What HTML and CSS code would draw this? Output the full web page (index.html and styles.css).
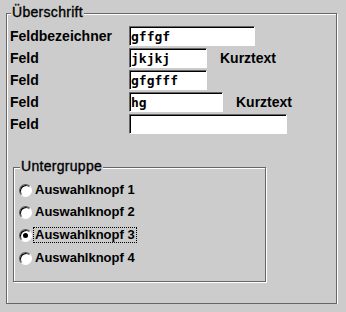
FILE: index.html
```html
<!DOCTYPE html>
<html lang="de">
<head>
    <meta charset="UTF-8">
    <title>Dialog</title>
    <link rel="stylesheet" href="styles.css">
</head>
<body>
    <div class="group outer">
        <span class="group-title">Überschrift</span>

        <div class="fields">
            <label class="field-label" for="f1">Feldbezeichner</label>
            <div class="field"><input class="edit w-126" id="f1" type="text" value="gffgf"></div>

            <label class="field-label" for="f2">Feld</label>
            <div class="field"><input class="edit w-78" id="f2" type="text" value="jkjkj"><span class="hint">Kurztext</span></div>

            <label class="field-label" for="f3">Feld</label>
            <div class="field"><input class="edit w-78" id="f3" type="text" value="gfgfff"></div>

            <label class="field-label" for="f4">Feld</label>
            <div class="field"><input class="edit w-94" id="f4" type="text" value="hg"><span class="hint">Kurztext</span></div>

            <label class="field-label" for="f5">Feld</label>
            <div class="field"><input class="edit w-158" id="f5" type="text" value=""></div>
        </div>

        <div class="group inner">
            <span class="group-title sub">Untergruppe</span>
            <div class="choices">
                <label class="choice"><input class="radio" type="radio" name="wahl"><span class="choice-text">Auswahlknopf 1</span></label>
                <label class="choice"><input class="radio" type="radio" name="wahl"><span class="choice-text">Auswahlknopf 2</span></label>
                <label class="choice"><input class="radio" type="radio" name="wahl" checked><span class="choice-text focused">Auswahlknopf 3</span></label>
                <label class="choice"><input class="radio" type="radio" name="wahl"><span class="choice-text">Auswahlknopf 4</span></label>
            </div>
        </div>
    </div>
</body>
</html>
```

FILE: styles.css
```css
body {
    margin: 0;
    background: #cccccc;
    color: #000;
    font-family: "Liberation Sans", Arial, sans-serif;
}

/* etched group box, like the old windows dialogs */
.group {
    position: relative;
    box-sizing: border-box;
    border: 1px solid #666666;
    box-shadow: 1px 1px 0 #ffffff, inset 1px 1px 0 #ffffff;
}

.outer {
    margin: 13px 0 0 6px;
    width: 331px;
    height: 291px;
    padding: 12px 0 0 3px;
}

.inner {
    margin: 33px 0 0 3px;
    width: 253px;
    height: 115px;
    padding: 12px 0 0 6px;
}

.group-title {
    position: absolute;
    top: -10px;
    left: 4px;
    padding: 0 1px;
    background: #cccccc;
    font-size: 14px;
    line-height: 16px;
    letter-spacing: 0.3px;
    -webkit-text-stroke: 0.35px #000;
}

.group-title.sub {
    left: 6px;
}

.fields {
    display: grid;
    grid-template-columns: 119px auto;
    row-gap: 2px;
    align-items: center;
}

.field-label {
    font-size: 14px;
    font-weight: bold;
}

.field {
    display: flex;
    align-items: center;
    gap: 13px;
}

.edit {
    box-sizing: border-box;
    height: 20px;
    margin: 0;
    padding: 0 1px;
    border: 1px solid;
    border-color: #666666 #ffffff #ffffff #666666;
    box-shadow: inset 1px 1px 0 #000000;
    background: #fff;
    font-family: "DejaVu Sans Mono", monospace;
    font-size: 13px;
    font-weight: bold;
    color: #000;
    outline: none;
}

.w-78 { width: 78px; }
.w-94 { width: 94px; }
.w-126 { width: 126px; }
.w-158 { width: 158px; }

.hint {
    font-size: 14px;
    font-weight: bold;
}

.choices {
    display: flex;
    flex-direction: column;
    gap: 2px;
}

.choice {
    display: flex;
    align-items: center;
    gap: 1px;
    height: 20px;
    font-size: 13px;
    font-weight: bold;
}

.choice:nth-child(n+3) {
    margin-top: 1px;
}

.radio {
    appearance: none;
    -webkit-appearance: none;
    position: relative;
    box-sizing: border-box;
    width: 13px;
    height: 13px;
    margin: 0 0 0 -1px;
    border-radius: 50%;
    border: 1px solid;
    border-color: #555555 #ffffff #ffffff #555555;
    box-shadow: inset 1px 1px 0 #000000;
    background: #fff;
}

.radio:checked::after {
    content: "";
    position: absolute;
    left: 3px;
    top: 3px;
    width: 5px;
    height: 5px;
    border-radius: 50%;
    background: #000;
}

.choice-text {
    padding: 0 1px;
    line-height: 14px;
    border: 1px solid transparent;
}

.choice-text.focused {
    border: 1px dotted #000;
}
```
